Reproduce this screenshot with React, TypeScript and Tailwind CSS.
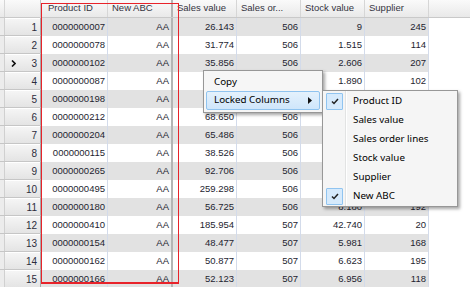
const rows = [
  ['0000000007', 'AA', '26.143', '506', '9', '245'],
  ['0000000078', 'AA', '31.774', '506', '1.515', '114'],
  ['0000000102', 'AA', '35.856', '506', '2.606', '207'],
  ['0000000087', 'AA', '', '', '1.890', '102'],
  ['0000000198', 'AA', '', '', '', ''],
  ['0000000212', 'AA', '68.650', '506', '', ''],
  ['0000000204', 'AA', '65.486', '506', '', ''],
  ['0000000115', 'AA', '38.526', '506', '', ''],
  ['0000000265', 'AA', '92.706', '506', '', ''],
  ['0000000495', 'AA', '259.298', '506', '', ''],
  ['0000000180', 'AA', '56.725', '506', '8.180', '192'],
  ['0000000410', 'AA', '185.954', '507', '42.740', '20'],
  ['0000000154', 'AA', '48.477', '507', '5.981', '168'],
  ['0000000162', 'AA', '50.877', '507', '6.623', '195'],
  ['0000000166', 'AA', '52.123', '507', '6.956', '118'],
];

const headers = ['Product ID', 'New ABC', 'Sales value', 'Sales or...', 'Stock value', 'Supplier'];
const widths = ['w-[67px]', 'w-[65px]', 'w-[64px]', 'w-[64px]', 'w-[64px]', 'w-[64px]'];

const subItems = [
  { label: 'Product ID', checked: true },
  { label: 'Sales value', checked: false },
  { label: 'Sales order lines', checked: false },
  { label: 'Stock value', checked: false },
  { label: 'Supplier', checked: false },
  { label: 'New ABC', checked: true },
];

const Check = () => (
  <svg width="8" height="7" viewBox="0 0 8 7" aria-hidden>
    <path d="M1 3.5 L3 5.5 L7 1" fill="none" stroke="#222" strokeWidth="1.5" />
  </svg>
);

const RowArrow = () => (
  <svg width="5" height="7" viewBox="0 0 5 7" aria-hidden>
    <path d="M1 0.5 L4 3.5 L1 6.5" fill="none" stroke="#111" strokeWidth="1.6" />
  </svg>
);

const SubArrow = () => (
  <svg width="4" height="7" viewBox="0 0 4 7" aria-hidden>
    <path d="M0 0 L4 3.5 L0 7 Z" fill="#111" />
  </svg>
);

export default function App() {
  return (
    <div className="relative w-[470px] h-[287px] overflow-hidden bg-white font-['Liberation_Sans',sans-serif] text-[9.5px] text-[#1e1e30]">
      {/* header */}
      <div className="flex h-[18px] bg-gradient-to-b from-[#fafafa] to-[#e9e9e9] border-b border-[#c9c9c9]">
        <div className="w-[41px] shrink-0 border-r border-[#c4c4c4] flex">
          <div className="w-[5px] border-r border-[#d6d6d6]" />
        </div>
        {headers.map((h, i) => (
          <div
            key={h}
            className={`${widths[i]} shrink-0 flex items-center text-[#34343f] border-r ${
              i === 1 ? 'border-r-[2px] border-[#b4b4b4]' : 'border-[#d6d6d6]'
            } ${i === 0 ? 'pl-[7px]' : 'pl-[4px]'}`}
          >
            {h}
          </div>
        ))}
        <div className="flex-1" />
      </div>

      {/* rows */}
      {rows.map((r, ri) => (
        <div key={ri} className="flex h-[18px]">
          <div className="w-[41px] shrink-0 flex border-r border-[#a9a9a9] border-b border-b-[#c6c6c6] bg-gradient-to-b from-[#f6f6f6] to-[#e4e4e4]">
            <div className="w-[5px] border-r border-[#d0d0d0] bg-[#ececec]" />
            <div className="flex-1 flex items-center justify-between pl-[6px] pr-[3px] border-t border-white text-[10px] text-[#2c2c3c]">
              <span>{ri === 2 ? <RowArrow /> : null}</span>
              <span>{ri + 1}</span>
            </div>
          </div>
          {r.map((c, ci) => (
            <div
              key={ci}
              className={`${widths[ci]} shrink-0 flex items-center justify-end pr-[2px] ${
                ri % 2 === 0 ? 'bg-[#e2e2e2]' : 'bg-white'
              } ${ci === 1 ? 'border-r-[2px] border-[#b4b4b4]' : 'border-r border-[#d3dbea]'}`}
            >
              {c}
            </div>
          ))}
          <div className="flex-1 bg-white" />
        </div>
      ))}

      {/* red highlight rectangle */}
      <div className="absolute left-[41px] top-[3px] w-[138px] h-[281px] border border-b-2 border-[#e8232a] pointer-events-none" />

      {/* context menu */}
      <div className="absolute left-[203px] top-[70px] w-[120px] p-[2px] bg-[#f6f6f6] border border-[#979797] shadow-[2px_2px_3px_rgba(0,0,0,0.35)] font-['Noto_Sans',sans-serif] text-[9.8px] text-black">
        <div className="h-[18px] flex items-center pl-[8px]">Copy</div>
        <div className="h-[19px] flex items-center justify-between pl-[7px] pr-[7px] rounded-[2px] border border-[#8fc3ef] bg-gradient-to-b from-[#e4f1fc] to-[#cfe6fb]">
          <span>Locked Columns</span>
          <SubArrow />
        </div>
      </div>

      {/* submenu */}
      <div className="absolute left-[322px] top-[90px] w-[136px] pt-[1px] bg-[#f5f5f5] border border-[#979797] shadow-[2px_2px_3px_rgba(0,0,0,0.35)] font-['Noto_Sans',sans-serif] text-[9.8px] text-black">
        <div className="absolute left-[22px] top-0 bottom-0 w-[2px] border-l border-[#e2e3e3] border-r border-r-white" />
        {subItems.map((it) => (
          <div key={it.label} className="relative h-[19px] flex items-center">
            <div className="w-[22px] flex justify-center pl-[1px]">
              {it.checked ? (
                <div className="w-[17px] h-[17px] flex items-center justify-center border border-[#90c4f0] bg-[#d6eafc] rounded-[1px]">
                  <Check />
                </div>
              ) : null}
            </div>
            <span className="pl-[8px]">{it.label}</span>
          </div>
        ))}
      </div>
    </div>
  );
}
